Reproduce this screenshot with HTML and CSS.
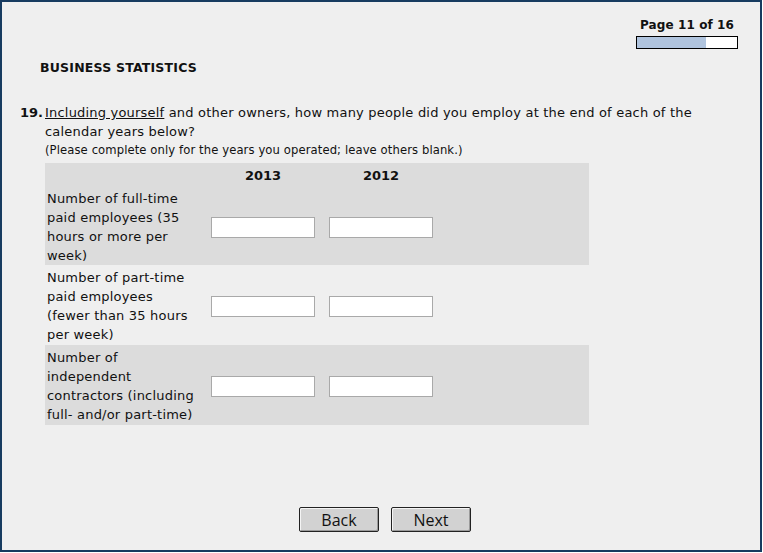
FILE: index.html
```html
<!DOCTYPE html>
<html>
<head>
<meta charset="utf-8">
<link rel="stylesheet" href="styles.css">
</head>
<body>
<div class="frame">
  <div class="progress-wrap">
    <div class="progress">
      <div class="page-label">Page 11 of 16</div>
      <div class="bar"><div class="fill" style="width: 68.75%"></div></div>
    </div>
  </div>
  <h1 class="section-title">BUSINESS STATISTICS</h1>
  <div class="question">
    <span class="qnum">19.</span>
    <div class="qbody">
      <p class="qtext"><span class="ul">Including yourself</span> and other owners, how many people did you employ at the end of each of the calendar years below?</p>
      <p class="qnote">(Please complete only for the years you operated; leave others blank.)</p>
      <div class="grid">
        <div class="group shaded first">
          <div class="row head">
            <div class="label"></div>
            <div class="cell year">2013</div>
            <div class="cell year">2012</div>
          </div>
          <div class="row">
            <div class="label">Number of full-time paid employees (35 hours or more per week)</div>
            <div class="cell"><input type="text" class="field"></div>
            <div class="cell"><input type="text" class="field"></div>
          </div>
        </div>
        <div class="group">
          <div class="row">
            <div class="label">Number of part-time paid employees (fewer than 35 hours per week)</div>
            <div class="cell"><input type="text" class="field"></div>
            <div class="cell"><input type="text" class="field"></div>
          </div>
        </div>
        <div class="group shaded">
          <div class="row">
            <div class="label">Number of independent contractors (including full- and/or part-time)</div>
            <div class="cell"><input type="text" class="field"></div>
            <div class="cell"><input type="text" class="field"></div>
          </div>
        </div>
      </div>
    </div>
  </div>
  <div class="nav">
    <button class="btn">Back</button>
    <button class="btn">Next</button>
  </div>
</div>
</body>
</html>
```

FILE: styles.css
```css
html, body {
  margin: 0;
  padding: 0;
  background: #ffffff;
}

.frame {
  box-sizing: border-box;
  width: 762px;
  height: 552px;
  border: 2px solid #173b60;
  background: #efefef;
  display: flex;
  flex-direction: column;
  font-family: "DejaVu Sans", Verdana, sans-serif;
  font-size: 13px;
  letter-spacing: 0.2px;
  color: #111;
}

.progress-wrap {
  display: flex;
  justify-content: flex-end;
  padding: 15px 22px 0 0;
}

.progress {
  width: 102px;
}

.page-label {
  font-weight: bold;
  text-align: center;
  line-height: 16px;
  font-size: 12px;
  letter-spacing: 0.1px;
}

.bar {
  margin-top: 3px;
  height: 11px;
  border: 1px solid #000;
  background: #fff;
}

.fill {
  height: 100%;
  background: #b0c4de;
}

.section-title {
  margin: 11px 0 0 38px;
  font-size: 12.5px;
  font-weight: bold;
  line-height: 16px;
}

.question {
  display: flex;
  margin-top: 27px;
  padding-left: 18px;
}

.qnum {
  width: 25px;
  font-weight: bold;
  line-height: 19px;
  letter-spacing: 0;
}

.qbody {
  flex: 1;
}

.qtext {
  margin: 0;
  width: 670px;
  line-height: 19px;
}

.ul {
  text-decoration: underline;
}

.qnote {
  margin: 0;
  font-size: 11.6px;
  letter-spacing: 0.1px;
  line-height: 19px;
}

.grid {
  margin-top: 3px;
  width: 544px;
}

.group {
  padding: 3px 0 1px;
}

.group.first {
  padding-bottom: 0;
}

.shaded {
  background: #dcdcdc;
}

.row {
  display: flex;
  align-items: center;
}

.head {
  height: 23px;
  align-items: flex-start;
  line-height: 19px;
}

.label {
  box-sizing: border-box;
  width: 166px;
  padding-left: 2px;
  padding-right: 14px;
  line-height: 19px;
}

.cell {
  width: 104px;
  margin-right: 14px;
}

.year {
  text-align: center;
  font-weight: bold;
  letter-spacing: 0;
}

.field {
  box-sizing: border-box;
  display: block;
  width: 104px;
  height: 21px;
  margin: 0;
  border: 1px solid #a9a9a9;
  background: #fff;
  padding: 0 2px;
}

.nav {
  margin-top: auto;
  display: flex;
  justify-content: center;
  gap: 12px;
  padding: 0 0 18px 8px;
}

.btn {
  box-sizing: border-box;
  width: 80px;
  height: 25px;
  border: 1px solid #222;
  border-radius: 2px;
  background: #d2d2d2;
  box-shadow: inset 1px 1px 0 #f4f4f4, inset -1px -1px 0 #9a9a9a;
  font-family: "Open Sans", "Noto Sans", sans-serif;
  font-size: 16px;
  letter-spacing: 0;
  color: #111;
  padding: 0;
  line-height: 22px;
}
```
